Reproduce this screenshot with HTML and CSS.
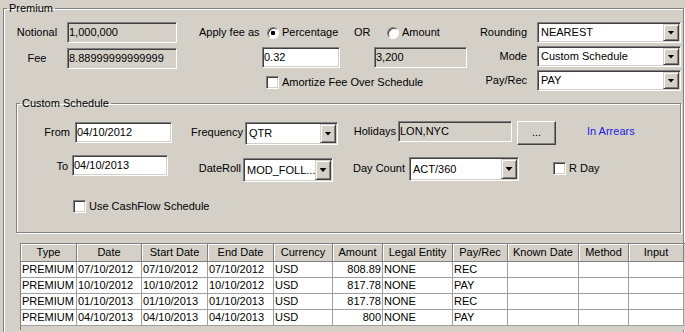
FILE: index.html
```html
<!DOCTYPE html>
<html>
<head>
  <meta charset="utf-8">
  <link rel="stylesheet" href="styles.css">
</head>
<body>
<fieldset class="group premium">
  <legend>Premium</legend>
  <div class="premium-body">
    <div class="premium-top">
      <div class="block-left">
        <label class="lbl-c">Notional</label>
        <div class="field ro">1,000,000</div>
        <label class="lbl-c">Fee</label>
        <div class="field ro">8.88999999999999</div>
      </div>
      <div class="block-mid">
        <label>Apply fee as</label>
        <span class="opt"><span class="radio on"></span>Percentage</span>
        <span class="or">OR</span>
        <span class="opt opt-amount"><span class="radio"></span>Amount</span>
        <div class="field pct">0.32</div>
        <div class="field ro amt">3,200</div>
        <span class="opt amortize"><span class="check"></span>Amortize Fee Over Schedule</span>
      </div>
      <div class="block-right">
        <label>Rounding</label>
        <div class="combo"><span class="val">NEAREST</span><span class="drop"></span></div>
        <label>Mode</label>
        <div class="combo"><span class="val">Custom Schedule</span><span class="drop"></span></div>
        <label>Pay/Rec</label>
        <div class="combo"><span class="val">PAY</span><span class="drop"></span></div>
      </div>
    </div>

    <fieldset class="group sched">
      <legend>Custom Schedule</legend>
      <div class="sched-body">
        <div class="row row-1">
          <label class="lbl-from">From</label>
          <div class="field from">04/10/2012</div>
          <label class="lbl-freq">Frequency</label>
          <div class="combo freq"><span class="val">QTR</span><span class="drop"></span></div>
          <label class="lbl-hol">Holidays</label>
          <div class="field ro hol">LON,NYC</div>
          <div class="btn">...</div>
          <span class="arrears">In Arrears</span>
        </div>
        <div class="row row-2">
          <label class="lbl-to">To</label>
          <div class="field to">04/10/2013</div>
          <label class="lbl-roll">DateRoll</label>
          <div class="combo roll"><span class="val">MOD_FOLL...</span><span class="drop"></span></div>
          <label class="lbl-dc">Day Count</label>
          <div class="combo dc"><span class="val">ACT/360</span><span class="drop"></span></div>
          <span class="check rday"></span>
          <label class="lbl-rday">R Day</label>
        </div>
        <div class="row row-3">
          <span class="check cash"></span>
          <label>Use CashFlow Schedule</label>
        </div>
      </div>
    </fieldset>

    <div class="grid-wrap">
      <table class="grid">
        <colgroup>
          <col style="width:56px"><col style="width:65px"><col style="width:66px"><col style="width:66px">
          <col style="width:59px"><col style="width:50px"><col style="width:70px"><col style="width:55px">
          <col style="width:71px"><col style="width:50px"><col style="width:55px">
        </colgroup>
        <thead>
          <tr>
            <th>Type</th><th>Date</th><th>Start Date</th><th>End Date</th><th>Currency</th><th>Amount</th>
            <th>Legal Entity</th><th>Pay/Rec</th><th>Known Date</th><th>Method</th><th>Input</th>
          </tr>
        </thead>
        <tbody>
          <tr>
            <td>PREMIUM</td><td>07/10/2012</td><td>07/10/2012</td><td>07/10/2012</td><td>USD</td>
            <td class="num">808.89</td><td>NONE</td><td>REC</td><td></td><td></td><td></td>
          </tr>
          <tr>
            <td>PREMIUM</td><td>10/10/2012</td><td>10/10/2012</td><td>10/10/2012</td><td>USD</td>
            <td class="num">817.78</td><td>NONE</td><td>PAY</td><td></td><td></td><td></td>
          </tr>
          <tr>
            <td>PREMIUM</td><td>01/10/2013</td><td>01/10/2013</td><td>01/10/2013</td><td>USD</td>
            <td class="num">817.78</td><td>NONE</td><td>REC</td><td></td><td></td><td></td>
          </tr>
          <tr>
            <td>PREMIUM</td><td>04/10/2013</td><td>04/10/2013</td><td>04/10/2013</td><td>USD</td>
            <td class="num">800</td><td>NONE</td><td>PAY</td><td></td><td></td><td></td>
          </tr>
        </tbody>
      </table>
    </div>
  </div>
</fieldset>
</body>
</html>
```

FILE: styles.css
```css
* {
  box-sizing: border-box;
}
html, body {
  margin: 0;
}
body {
  width: 685px;
  height: 332px;
  overflow: hidden;
  background: #d4d0c8;
  color: #000;
  font: 11px/13px "Liberation Sans", Arial, sans-serif;
}

/* group boxes */
.group {
  margin: 0;
  padding: 0;
  min-width: 0;
  border: 1px solid #808080;
  box-shadow: inset 1px 1px 0 #fff, 1px 1px 0 #fff;
}
.group > legend {
  margin-left: 3px;
  padding: 0 2px;
  line-height: 13px;
}
.premium {
  margin: 2px 0 0 3px;
  width: 681px;
  height: 330px;
  border-bottom: 0;
  box-shadow: inset 1px 1px 0 #fff, 1px 0 0 #fff;
}
.premium-body {
  padding: 7px 2px 0 12px;
}
.premium-top {
  display: flex;
  height: 71px;
}

.block-left {
  display: grid;
  grid-template-columns: 42px 110px;
  grid-template-rows: 21px 21px;
  column-gap: 9px;
  row-gap: 5px;
  align-items: center;
}
.lbl-c {
  text-align: center;
}

.block-mid {
  display: grid;
  grid-template-columns: 63px 92px 20px 93px;
  grid-template-rows: 21px 21px 21px;
  row-gap: 4px;
  margin-left: 22px;
  align-items: center;
}
.opt {
  display: flex;
  align-items: center;
}
.radio {
  width: 12px;
  height: 12px;
  margin: 0 3px 0 5px;
  border-radius: 50%;
  border: 1px solid;
  border-color: #808080 #fff #fff #808080;
  background: #fff;
  box-shadow: inset 1px 1px 0 #404040;
}
.radio.on {
  background: radial-gradient(circle, #000 0 2px, #fff 2.5px);
}
.opt-amount .radio {
  margin-left: 13px;
}
.pct {
  grid-column: 2;
  width: 78px;
}
.amt {
  grid-column: 4;
}
.amortize {
  grid-column: 2 / 5;
}
.check {
  flex: none;
  width: 13px;
  height: 13px;
  margin: 0 3px 0 4px;
  border: 1px solid;
  border-color: #808080 #fff #fff #808080;
  background: #fff;
  box-shadow: inset 1px 1px 0 #404040, inset -1px -1px 0 #d4d0c8;
}

.block-right {
  display: grid;
  grid-template-columns: auto 144px;
  grid-template-rows: 21px 21px 21px;
  column-gap: 10px;
  row-gap: 3px;
  margin-left: auto;
  align-items: center;
}
.block-right label {
  text-align: right;
}

/* sunken edit boxes and combos */
.field {
  height: 21px;
  padding: 0 1px;
  border: 1px solid;
  border-color: #808080 #fff #fff #808080;
  box-shadow: inset 1px 1px 0 #404040, inset -1px -1px 0 #d4d0c8;
  background: #fff;
  line-height: 19px;
  white-space: nowrap;
  overflow: hidden;
}
.field.ro {
  background: #d4d0c8;
}
.combo {
  display: flex;
  height: 21px;
  padding: 1px;
  border: 1px solid;
  border-color: #808080 #fff #fff #808080;
  box-shadow: inset 1px 1px 0 #404040, inset -1px -1px 0 #d4d0c8;
  background: #fff;
}
.combo .val {
  flex: 1;
  padding-left: 2px;
  align-self: center;
  white-space: nowrap;
  overflow: hidden;
}
.drop {
  display: flex;
  align-items: center;
  justify-content: center;
  width: 16px;
  border: 1px solid;
  border-color: #d4d0c8 #404040 #404040 #d4d0c8;
  box-shadow: inset 1px 1px 0 #fff, inset -1px -1px 0 #808080;
  background: #d4d0c8;
}
.drop::after {
  content: "";
  width: 7px;
  height: 4px;
  background: #000;
  clip-path: polygon(0 0, 100% 0, 50% 100%);
}

.btn {
  width: 39px;
  height: 24px;
  margin-left: 5px;
  border: 1px solid;
  border-color: #fff #404040 #404040 #fff;
  box-shadow: inset -1px -1px 0 #808080;
  text-align: center;
  line-height: 20px;
}

/* custom schedule */
.sched {
  margin-top: 4px;
}
.sched-body {
  padding: 11px 0 19px 0;
}
.row {
  display: flex;
  align-items: flex-start;
}
.row label {
  line-height: 21px;
}
.row-1 {
  height: 24px;
}
.lbl-from {
  width: 54px;
  margin-top: 1px;
  padding-right: 1px;
  text-align: right;
}
.from {
  width: 97px;
  margin: 1px 0 0 4px;
}
.lbl-freq {
  width: 71px;
  margin-top: 1px;
  text-align: right;
}
.freq {
  width: 93px;
  height: 23px;
  margin: 1px 0 0 2px;
}
.lbl-hol {
  width: 58px;
  text-align: right;
}
.hol {
  width: 114px;
  margin-left: 2px;
}
.arrears {
  margin-left: 31px;
  line-height: 21px;
  color: #1c1ce0;
}
.row-2 {
  height: 27px;
  margin-top: 10px;
}
.lbl-to {
  width: 52px;
  margin-top: 1px;
  padding-right: 1px;
  text-align: right;
}
.to {
  width: 96px;
  margin-left: 3px;
}
.lbl-roll {
  width: 73px;
  margin-top: 3px;
  text-align: right;
}
.roll {
  width: 90px;
  height: 24px;
  margin: 3px 0 0 2px;
}
.lbl-dc {
  width: 72px;
  margin-top: 3px;
  text-align: right;
}
.dc {
  width: 110px;
  height: 24px;
  margin: 2px 0 0 4px;
}
.rday {
  margin: 7px 3px 0 34px;
}
.lbl-rday {
  margin-top: 3px;
}
.row-3 {
  margin-top: 18px;
  align-items: center;
}
.row-3 label {
  line-height: 13px;
}
.cash {
  margin: 0 3px 0 56px;
}

/* grid */
.grid-wrap {
  width: 666px;
  height: 87px;
  margin: 10px 0 0 4px;
  border-top: 1px solid #808080;
  border-left: 1px solid #808080;
  background: #d4d0c8;
  overflow: hidden;
}
.grid {
  table-layout: fixed;
  width: 663px;
  border-collapse: separate;
  border-spacing: 0;
}
.grid th {
  height: 18px;
  padding: 0;
  border-right: 1px solid #808080;
  border-bottom: 1px solid #808080;
  box-shadow: inset 1px 1px 0 #fff;
  background: #d4d0c8;
  font-weight: normal;
  text-align: center;
  white-space: nowrap;
  overflow: hidden;
}
.grid td {
  height: 16px;
  padding: 0 1px;
  border-right: 1px solid #a0a0a0;
  border-bottom: 1px solid #a0a0a0;
  background: #fff;
  line-height: 15px;
  white-space: nowrap;
  overflow: hidden;
}
.grid td.num {
  text-align: right;
}
```
